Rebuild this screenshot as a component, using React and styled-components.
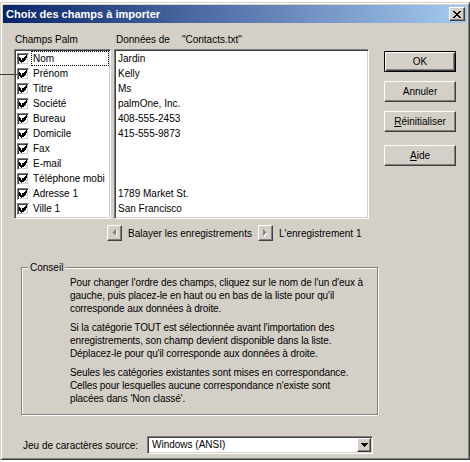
import React from 'react';
import styled, { createGlobalStyle } from 'styled-components';

const GlobalStyle = createGlobalStyle`
  html, body {
    margin: 0;
    padding: 0;
    background: #fff;
  }
  body {
    font-family: "Liberation Sans", Arial, sans-serif;
    font-size: 10px;
    color: #000;
  }
`;

const Window = styled.div`
  position: relative;
  box-sizing: border-box;
  width: 470px;
  height: 458px;
  margin-top: 2px;
  padding: 2px;
  background: #d4d0c8;
  border: 1px solid;
  border-color: #d4d0c8 #404040 #404040 #d4d0c8;
  box-shadow: inset 1px 1px 0 #fff, inset -1px -1px 0 #808080;
  display: flex;
  flex-direction: column;
`;

const Callout = styled.div`
  position: absolute;
  left: -1px;
  top: 71px;
  width: 17px;
  height: 1px;
  background: #3a3a3a;
`;

const TitleBar = styled.div`
  height: 18px;
  display: flex;
  align-items: center;
  justify-content: space-between;
  padding: 0 2px 0 3px;
  background: linear-gradient(to right, #0a246a, #a6caf0);
  color: #fff;
  font-size: 11px;
  font-weight: bold;
`;

const CloseButton = styled.div`
  box-sizing: border-box;
  width: 16px;
  height: 14px;
  display: flex;
  align-items: center;
  justify-content: center;
  background: #d4d0c8;
  border: 1px solid;
  border-color: #fff #404040 #404040 #fff;
  box-shadow: inset -1px -1px 0 #808080;
`;

const Content = styled.div`
  display: flex;
  flex-direction: column;
  padding: 10px 10px 0 11px;
`;

const TopRow = styled.div`
  display: flex;
`;

const LeftArea = styled.div`
  width: 355px;
  display: flex;
  flex-direction: column;
`;

const HeaderRow = styled.div`
  display: flex;
  height: 13px;
  line-height: 13px;
  margin-bottom: 3px;
  white-space: nowrap;
`;

const HeaderCell = styled.div`
  width: ${p => p.$width || 'auto'};
  padding-left: 1px;
`;

const FileName = styled.span`
  margin-left: 12px;
`;

const ListsRow = styled.div`
  display: flex;
  gap: 3px;
`;

const ListBox = styled.div`
  box-sizing: border-box;
  width: ${p => p.$width}px;
  height: 170px;
  padding: 1px;
  background: #fff;
  border: 1px solid;
  border-color: #808080 #fff #fff #808080;
  box-shadow: inset 1px 1px 0 #404040, inset -1px -1px 0 #d4d0c8;
  overflow: hidden;
`;

const Row = styled.div`
  height: 15px;
  display: flex;
  align-items: center;
  white-space: nowrap;
  overflow: hidden;
`;

const CheckBox = styled.span`
  box-sizing: border-box;
  flex: none;
  width: 12px;
  height: 12px;
  margin-left: 1px;
  display: flex;
  align-items: center;
  justify-content: center;
  background: #fff;
  border: 1px solid;
  border-color: #808080 #fff #fff #808080;
  box-shadow: inset 1px 1px 0 #404040, inset -1px -1px 0 #d4d0c8;
`;

const FieldName = styled.span`
  flex: 1;
  margin-left: 2px;
  padding-left: 1px;
  height: 13px;
  line-height: 13px;
  border: 1px dotted ${p => (p.$focused ? '#000' : 'transparent')};
  overflow: hidden;
`;

const DataCell = styled.span`
  padding-left: 2px;
  line-height: 13px;
`;

const NavRow = styled.div`
  display: flex;
  align-items: center;
  height: 16px;
  margin-top: 6px;
  padding-left: 93px;
  white-space: nowrap;
`;

const RaisedButton = styled.div`
  box-sizing: border-box;
  display: flex;
  align-items: center;
  justify-content: center;
  background: #d4d0c8;
  border: 1px solid;
  border-color: #fff #404040 #404040 #fff;
  box-shadow: inset -1px -1px 0 #808080;
`;

const NavButton = styled(RaisedButton)`
  width: 15px;
  height: 16px;
`;

const NavText = styled.span`
  margin: 0 6px;
`;

const ButtonColumn = styled.div`
  display: flex;
  flex-direction: column;
  margin-left: 15px;
  padding-top: 18px;
`;

const DialogButton = styled(RaisedButton)`
  width: 72px;
  height: 21px;
  margin-top: ${p => p.$gap || 0}px;
  ${p =>
    p.$default &&
    `
    border: 1px solid #000;
    box-shadow: inset 1px 1px 0 #fff, inset -1px -1px 0 #404040, inset -2px -2px 0 #808080;
  `}
`;

const Accel = styled.span`
  text-decoration: underline;
`;

const GroupBox = styled.div`
  position: relative;
  box-sizing: border-box;
  width: 357px;
  margin: 26px 0 0 7px;
  padding: 8px 10px 9px 48px;
  border: 1px solid #808080;
  box-shadow: inset 1px 1px 0 #fff, 1px 1px 0 #fff;
`;

const Legend = styled.span`
  position: absolute;
  top: -7px;
  left: 6px;
  padding: 0 2px;
  line-height: 13px;
  background: #d4d0c8;
`;

const Paragraph = styled.p`
  margin: ${p => (p.$first ? 0 : 6)}px 0 0;
  line-height: 13px;
  letter-spacing: -0.1px;
  white-space: nowrap;
`;

const ComboRow = styled.div`
  display: flex;
  align-items: center;
  margin-top: 21px;
  padding-left: 9px;
  height: 18px;
  white-space: nowrap;
`;

const ComboLabel = styled.span`
  width: 124px;
`;

const Combo = styled.div`
  box-sizing: border-box;
  width: 226px;
  height: 18px;
  display: flex;
  padding: 1px;
  background: #fff;
  border: 1px solid;
  border-color: #808080 #fff #fff #808080;
  box-shadow: inset 1px 1px 0 #404040, inset -1px -1px 0 #d4d0c8;
`;

const ComboText = styled.span`
  flex: 1;
  padding-left: 3px;
  line-height: 14px;
`;

const ComboArrow = styled(RaisedButton)`
  width: 14px;
  height: 14px;
`;

const CheckMark = () => (
  <svg width="8" height="8" viewBox="0 0 7 7" shapeRendering="crispEdges">
    <rect x="6" y="0" width="1" height="1" />
    <rect x="5" y="1" width="2" height="1" />
    <rect x="0" y="2" width="1" height="1" />
    <rect x="4" y="2" width="3" height="1" />
    <rect x="0" y="3" width="2" height="1" />
    <rect x="3" y="3" width="3" height="1" />
    <rect x="0" y="4" width="5" height="1" />
    <rect x="1" y="5" width="3" height="1" />
    <rect x="2" y="6" width="1" height="1" />
  </svg>
);

const CloseGlyph = () => (
  <svg width="8" height="7" viewBox="0 0 8 7" shapeRendering="crispEdges">
    <rect x="0" y="0" width="2" height="1" />
    <rect x="6" y="0" width="2" height="1" />
    <rect x="1" y="1" width="2" height="1" />
    <rect x="5" y="1" width="2" height="1" />
    <rect x="2" y="2" width="4" height="1" />
    <rect x="3" y="3" width="2" height="1" />
    <rect x="2" y="4" width="4" height="1" />
    <rect x="1" y="5" width="2" height="1" />
    <rect x="5" y="5" width="2" height="1" />
    <rect x="0" y="6" width="2" height="1" />
    <rect x="6" y="6" width="2" height="1" />
  </svg>
);

const Arrow = ({ dir }) => (
  <svg width="6" height="8" viewBox="0 0 6 8">
    {dir === 'left' ? (
      <>
        <polygon points="5,1 5,8 1.5,4.5" fill="#fff" />
        <polygon points="4,0 4,7 0.5,3.5" fill="#808080" />
      </>
    ) : (
      <>
        <polygon points="2,1 2,8 5.5,4.5" fill="#fff" />
        <polygon points="1,0 1,7 4.5,3.5" fill="#808080" />
      </>
    )}
  </svg>
);

const DownArrow = () => (
  <svg width="7" height="4" viewBox="0 0 7 4" shapeRendering="crispEdges">
    <rect x="0" y="0" width="7" height="1" />
    <rect x="1" y="1" width="5" height="1" />
    <rect x="2" y="2" width="3" height="1" />
    <rect x="3" y="3" width="1" height="1" />
  </svg>
);

const fields = [
  'Nom', 'Prénom', 'Titre', 'Société', 'Bureau', 'Domicile',
  'Fax', 'E-mail', 'Téléphone mobi', 'Adresse 1', 'Ville 1',
];

const values = [
  'Jardin', 'Kelly', 'Ms', 'palmOne, Inc.', '408-555-2453', '415-555-9873',
  '', '', '', '1789 Market St.', 'San Francisco',
];

export default function App() {
  return (
    <>
      <GlobalStyle />
      <Window>
        <Callout />
        <TitleBar>
          <span>Choix des champs à importer</span>
          <CloseButton>
            <CloseGlyph />
          </CloseButton>
        </TitleBar>
        <Content>
          <TopRow>
            <LeftArea>
              <HeaderRow>
                <HeaderCell $width="100px">Champs Palm</HeaderCell>
                <HeaderCell>
                  Données de<FileName>"Contacts.txt"</FileName>
                </HeaderCell>
              </HeaderRow>
              <ListsRow>
                <ListBox $width={97}>
                  {fields.map((name, i) => (
                    <Row key={name}>
                      <CheckBox>
                        <CheckMark />
                      </CheckBox>
                      <FieldName $focused={i === 0}>{name}</FieldName>
                    </Row>
                  ))}
                </ListBox>
                <ListBox $width={255}>
                  {values.map((val, i) => (
                    <Row key={i}>
                      <DataCell>{val}</DataCell>
                    </Row>
                  ))}
                </ListBox>
              </ListsRow>
              <NavRow>
                <NavButton>
                  <Arrow dir="left" />
                </NavButton>
                <NavText>Balayer les enregistrements</NavText>
                <NavButton>
                  <Arrow dir="right" />
                </NavButton>
                <NavText>L'enregistrement 1</NavText>
              </NavRow>
            </LeftArea>
            <ButtonColumn>
              <DialogButton $default>OK</DialogButton>
              <DialogButton $gap={9}>Annuler</DialogButton>
              <DialogButton $gap={9}>
                <Accel>R</Accel>éinitialiser
              </DialogButton>
              <DialogButton $gap={13}>
                <Accel>A</Accel>ide
              </DialogButton>
            </ButtonColumn>
          </TopRow>
          <GroupBox>
            <Legend>Conseil</Legend>
            <Paragraph $first>
              Pour changer l'ordre des champs, cliquez sur le nom de l'un d'eux à<br />
              gauche, puis placez-le en haut ou en bas de la liste pour qu'il<br />
              corresponde aux données à droite.
            </Paragraph>
            <Paragraph>
              Si la catégorie TOUT est sélectionnée avant l'importation des<br />
              enregistrements, son champ devient disponible dans la liste.<br />
              Déplacez-le pour qu'il corresponde aux données à droite.
            </Paragraph>
            <Paragraph>
              Seules les catégories existantes sont mises en correspondance.<br />
              Celles pour lesquelles aucune correspondance n'existe sont<br />
              placées dans 'Non classé'.
            </Paragraph>
          </GroupBox>
          <ComboRow>
            <ComboLabel>Jeu de caractères source:</ComboLabel>
            <Combo>
              <ComboText>Windows (ANSI)</ComboText>
              <ComboArrow>
                <DownArrow />
              </ComboArrow>
            </Combo>
          </ComboRow>
        </Content>
      </Window>
    </>
  );
}
